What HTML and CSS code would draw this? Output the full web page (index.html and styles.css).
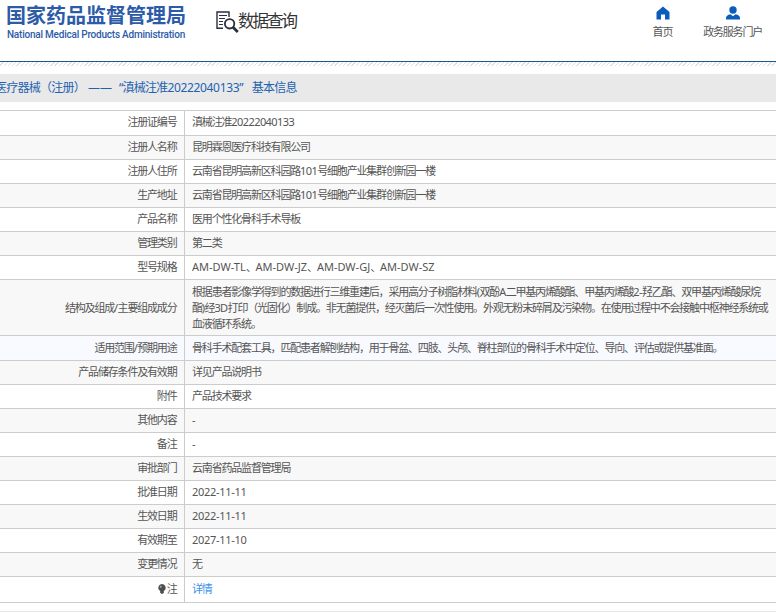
FILE: index.html
```html
<!DOCTYPE html>
<html lang="zh-CN">
<head>
    <meta charset="UTF-8">
    <meta name="viewport" content="width=device-width, initial-scale=1.0">
    <title>数据查询 - 国家药品监督管理局</title>
    <link rel="stylesheet" href="styles.css">
</head>
<body>
    <!-- 页头 -->
    <header class="header">
        <div class="logo">
            <div class="logo-cn">国家药品监督管理局</div>
            <div class="logo-en">National Medical Products Administration</div>
        </div>
        <div class="search-title">
            <svg class="search-icon" width="23" height="23" viewBox="0 0 23 23" fill="none" stroke="#2b2f3d">
                <path d="M7 17.3H1V1H13V6" stroke-width="1.4"/>
                <path d="M3 4.5H11M3 7.5H9M3 10.5H7M3 13.5H7" stroke-width="1.2"/>
                <circle cx="13.6" cy="12.8" r="4.7" stroke-width="1.8"/>
                <path d="M17 16.3L21.8 21" stroke-width="2.8"/>
            </svg>
            <span>数据查询</span>
        </div>
        <nav class="nav">
            <a class="nav-home" href="#">
                <svg width="14" height="14" viewBox="0 0 14 14" fill="#0b5cbd">
                  <path d="M7 0.5L13.5 6V13.5H9V8.5H5V13.5H0.5V6Z"/>
                </svg>
                <span>首页</span>
            </a>
            <a class="nav-user" href="#">
                <svg width="14" height="14" viewBox="0 0 14 14" fill="#0b5cbd">
                  <circle cx="7" cy="4" r="3.7"/>
                  <path d="M0 13.6V12Q0 9.2 4.5 8.3L7 10.3L9.5 8.3Q14 9.2 14 12V13.6Z"/>
                </svg>
                <span>政务服务门户</span>
            </a>
        </nav>
    </header>
    <div class="stripe"></div>

    <h1 class="title"><span>医疗器械（注册）</span><span class="dash">——</span><span class="title-name">“滇械注准<span class="title-num">20222040133</span>”</span><span>基本信息</span></h1>

    <!-- 基本信息表 -->
    <table class="info">
        <tr class="first"><th>注册证编号</th><td>滇械注准<span class="num">20222040133</span></td></tr>
        <tr><th>注册人名称</th><td>昆明霖恩医疗科技有限公司</td></tr>
        <tr><th>注册人住所</th><td>云南省昆明高新区科园路<span class="num">101</span>号细胞产业集群创新园一楼</td></tr>
        <tr><th>生产地址</th><td>云南省昆明高新区科园路<span class="num">101</span>号细胞产业集群创新园一楼</td></tr>
        <tr><th>产品名称</th><td>医用个性化骨科手术导板</td></tr>
        <tr><th>管理类别</th><td>第二类</td></tr>
        <tr><th>型号规格</th><td><span class="model">AM-DW-TL</span>、<span class="model">AM-DW-JZ</span>、<span class="model">AM-DW-GJ</span>、<span class="model">AM-DW-SZ</span></td></tr>
        <tr class="tall"><th>结构及组成<span class="num">/</span>主要组成成分</th><td>根据患者影像学得到的数据进行三维重建后，采用高分子树脂材料<span class="num">(</span>双酚<span class="num">A</span>二甲基丙烯酸酯、甲基丙烯酸<span class="num">2-</span>羟乙酯、双甲基丙烯酸尿烷<br>酯<span class="num">)</span>经<span class="num">3D</span>打印（光固化）制成。非无菌提供，经灭菌后一次性使用。外观无粉末碎屑及污染物。在使用过程中不会接触中枢神经系统或<br>血液循环系统。</td></tr>
        <tr class="hover"><th>适用范围<span class="num">/</span>预期用途</th><td>骨科手术配套工具，匹配患者解刨结构，用于骨盆、四肢、头颅、脊柱部位的骨科手术中定位、导向、评估或提供基准面。</td></tr>
        <tr><th>产品储存条件及有效期</th><td>详见产品说明书</td></tr>
        <tr><th>附件</th><td>产品技术要求</td></tr>
        <tr><th>其他内容</th><td>-</td></tr>
        <tr><th>备注</th><td>-</td></tr>
        <tr><th>审批部门</th><td>云南省药品监督管理局</td></tr>
        <tr><th>批准日期</th><td><span class="date">2022-11-11</span></td></tr>
        <tr><th>生效日期</th><td><span class="date">2022-11-11</span></td></tr>
        <tr><th>有效期至</th><td><span class="date">2027-11-10</span></td></tr>
        <tr><th>变更情况</th><td>无</td></tr>
        <tr class="last"><th><svg class="bulb" width="8" height="10" viewBox="0 0 8 10"><path d="M4 0A3.7 3.7 0 0 1 5.8 6.9V9L4 10L2.2 9V6.9A3.7 3.7 0 0 1 4 0Z" fill="#4d4d4d"/><circle cx="2.8" cy="2.8" r="1" fill="#aaa"/></svg>注</th><td><a class="detail" href="#">详情</a></td></tr>
    </table>
    <div class="bottom-line"></div>
</body>
</html>
```
FILE: styles.css
```css
* {
    box-sizing: border-box;
}

body {
    margin: 0;
    background: #fff;
    color: #555;
    font-family: "Noto Sans", "Noto Sans CJK SC", sans-serif;
    font-size: 11px;
    overflow: hidden;
}

a {
    color: inherit;
    text-decoration: none;
}

/* 页头 */
.header {
    display: flex;
    height: 62px;
    border-bottom: 1px solid #1c5a8c;
}

.logo {
    width: 216px;
    padding: 3px 0 0 6px;
    color: #2d5ba8;
    white-space: nowrap;
}

.logo-cn {
    font-size: 20px;
    font-weight: 700;
    line-height: 25px;
}

.logo-en {
    padding-left: 1px;
    font-family: Roboto, sans-serif;
    font-size: 10px;
    font-weight: 500;
    line-height: 14px;
    letter-spacing: -0.22px;
}

.search-title {
    display: flex;
    align-items: flex-start;
    padding-top: 11px;
    color: #333;
    font-size: 16.5px;
    line-height: 19px;
    letter-spacing: -2px;
}

.search-title span {
    margin-left: -1px;
}

.nav {
    display: flex;
    margin-left: auto;
    padding: 6px 14px 0 0;
    gap: 31px;
    letter-spacing: -1.2px;
}

.nav a {
    display: flex;
    flex-direction: column;
    align-items: center;
    line-height: 16px;
    gap: 4px;
}

.nav-home span {
    margin-left: -1px;
}

/* 斜纹 */
.stripe {
    height: 4px;
    margin-bottom: 8px;
    background: repeating-linear-gradient(135deg, #fff 0 2px, #e2e2e2 2px 3px);
}

/* 标题栏 */
.title {
    display: flex;
    height: 28px;
    margin: 0 0 8px -5px;
    background: #e9e9e9;
    color: #1f62b0;
    font-size: 12px;
    font-weight: 400;
    line-height: 28px;
    letter-spacing: -0.75px;
    white-space: nowrap;
}

.title .dash {
    margin: 0 7px 0 3px;
    letter-spacing: 0;
}

.title-name {
    margin-right: 9px;
}

.title-num {
    letter-spacing: -0.36px;
}

/* 信息表 */
.info {
    width: 100%;
    border-collapse: collapse;
    table-layout: fixed;
    letter-spacing: -1.18px;
    line-height: 16px;
}

.info tr {
    height: 24px;
    border-top: 1px solid #ccc;
}

.info tr:nth-child(even) {
    background: #f8f8f8;
}

.info th {
    width: 184px;
    padding: 0 7px 2px 0;
    border-right: 1px solid #ccc;
    font-weight: 400;
    text-align: right;
}

.info td {
    padding: 0 0 2px 7.5px;
    white-space: nowrap;
}

.info .num {
    letter-spacing: -0.57px;
}

.info .date {
    letter-spacing: -0.3px;
}

.info .model {
    letter-spacing: 0;
}

.info .first {
    height: 25px;
}

.info .tall {
    height: 56px;
}

.info .tall th,
.info .tall td {
    padding-bottom: 0;
}

.info .hover {
    height: 25px;
    background: #f8faff;
}

.info .hover th,
.info .hover td {
    padding-bottom: 0;
}

.info .last {
    height: 26px;
    border-bottom: 1px solid #ccc;
}

.bulb {
    margin-right: 1px;
    vertical-align: -1px;
}

.detail {
    color: #3c91e8;
}

.bottom-line {
    height: 1px;
    margin-top: 8px;
    background: #e8e8e8;
}
```
